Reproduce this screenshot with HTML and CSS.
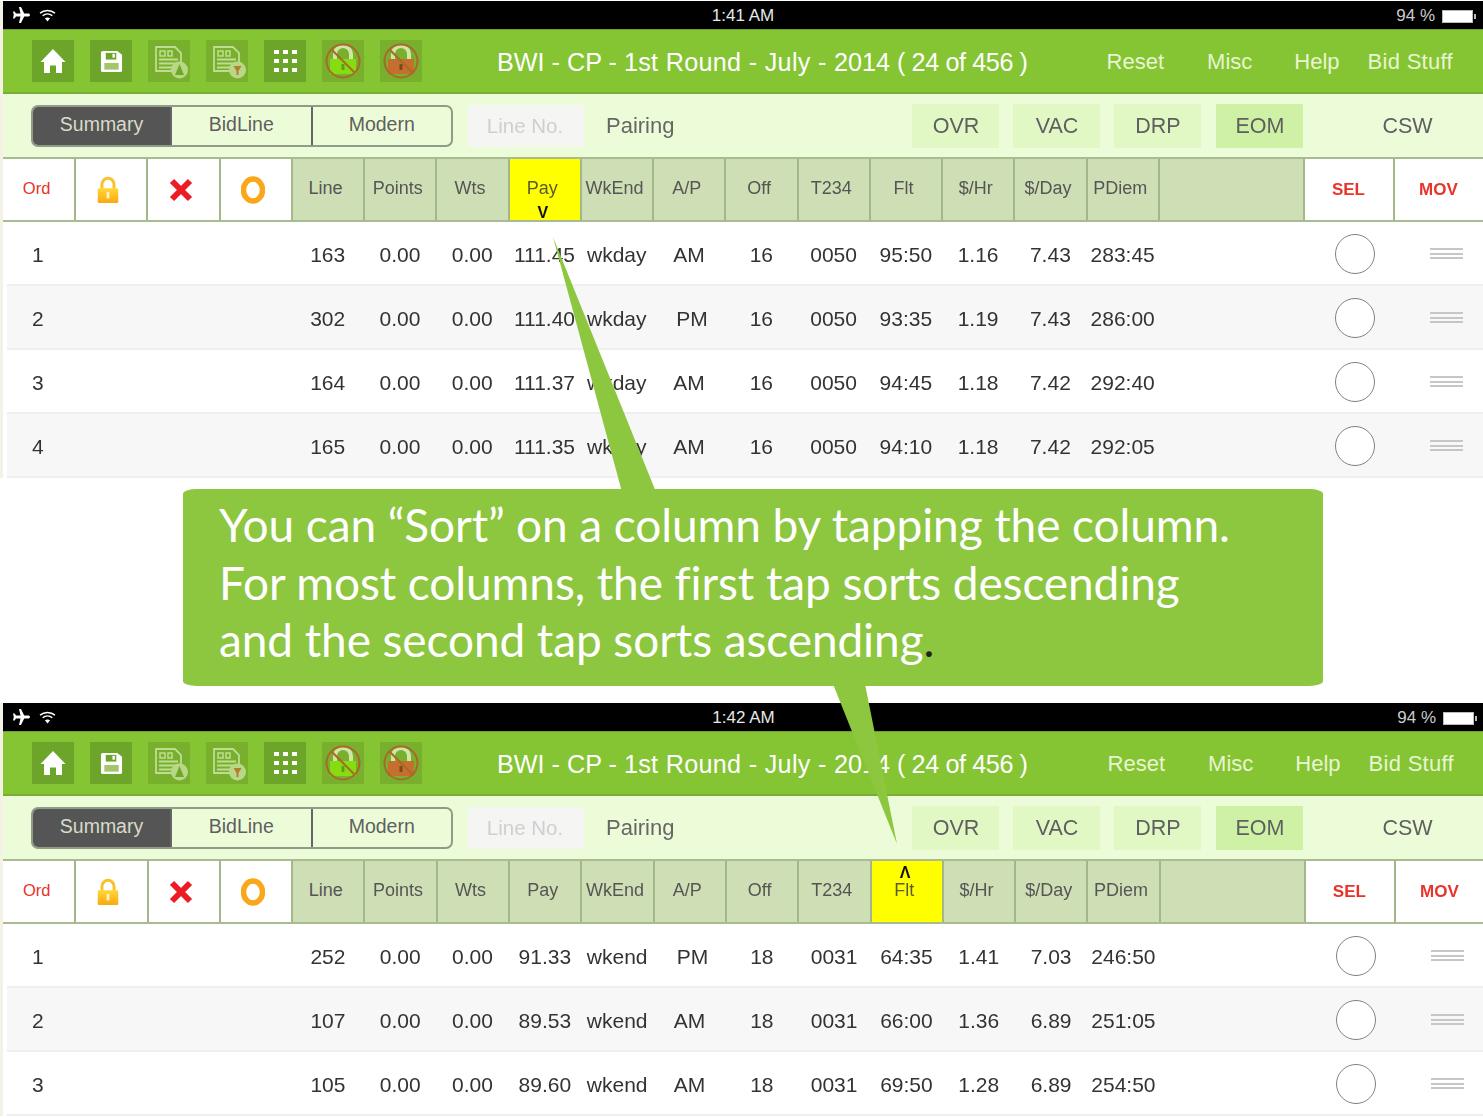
FILE: index.html
```html
<!DOCTYPE html>
<html lang="en">
<head>
<meta charset="utf-8">
<title>Sorting columns</title>
<link rel="stylesheet" href="styles.css">
</head>
<body>
<svg class="defs" width="0" height="0" aria-hidden="true">
  <defs>
    <linearGradient id="gold" x1="0" y1="0" x2="0" y2="1"><stop offset="0" stop-color="#ffd83a"/><stop offset="1" stop-color="#f9a811"/></linearGradient>
    <symbol id="plane" viewBox="0 0 18 16"><path d="M7 0h2l3.200 6.500H16c1.200 0 2 .7 2 1.500s-.8 1.500-2 1.500h-3.800L9 16H7l1.500-6.500H4L2.600 11.500H1L1.800 8 1 4.500h1.600L4 6.500h4.500z" fill="#fff"/></symbol>
    <symbol id="wifi" viewBox="0 0 18 14"><path d="M1 4.500C5.500.5 12.500.5 17 4.500" fill="none" stroke="#fff" stroke-width="1.600"/><path d="M3.800 7.300C6.800 4.800 11.200 4.800 14.200 7.300" fill="none" stroke="#fff" stroke-width="1.600"/><path d="M9 13.500 6.200 10c1.700-1.300 3.900-1.300 5.600 0z" fill="#fff"/></symbol>
    <symbol id="home" viewBox="0 0 26 26"><path d="M13 1 25.500 14H22v11h-6v-7.500h-6V25H4V14H.5z" fill="#fff"/></symbol>
    <symbol id="save" viewBox="0 0 24 24"><path d="M3 1h15l5 4v16a2 2 0 0 1-2 2H3a2 2 0 0 1-2-2V3a2 2 0 0 1 2-2z" fill="#fff"/><path d="M6 3h11v7H6z" fill="#6da52a"/><path d="M13 4h2.500v4H13z" fill="#fff"/><path d="M4.500 13.500h15v7h-15z" fill="#a3c66c"/></symbol>
    <symbol id="doc" viewBox="0 0 34 34"><path d="M2 2h19l6 6v13H19v5H2z" fill="none" stroke="#d7ebb6" stroke-width="1.800"/><path d="M6 6h5v5H6zM14 6h4v5h-4z" fill="none" stroke="#d7ebb6" stroke-width="1.500"/><path d="M5 14.500h19M5 18.500h19M5 22.500h13" stroke="#d7ebb6" stroke-width="2"/><circle cx="25.500" cy="25" r="8.500" fill="#cfe6a6"/></symbol>
    <symbol id="dots" viewBox="0 0 24 24"><path d="M1 1h5v4H1zM10 1h5v4h-5zM19 1h5v4h-5zM1 10h5v4H1zM10 10h5v4h-5zM19 10h5v4h-5zM1 19h5v4H1zM10 19h5v4h-5zM19 19h5v4h-5z" fill="#fff"/></symbol>
    <symbol id="gold-lock" viewBox="0 0 24 30"><path d="M5.500 14V9a6.500 6.500 0 0 1 13 0v5" fill="none" stroke="#fbc12c" stroke-width="3.200"/><rect x="1" y="13" width="22" height="16" rx="1.500" fill="url(#gold)"/><path d="M10.500 17h3v7h-3z" fill="#fff3c0"/></symbol>
  </defs>
</svg>

<section class="screen">
  <div class="status"><div class="status-left"><svg class="plane"><use href="#plane"/></svg><svg class="wifi"><use href="#wifi"/></svg></div><span class="clock">1:41 AM</span><div class="status-right"><span>94 %</span><span class="battery"></span></div></div>
  <div class="topbar">
    <div class="tools">
      <span class="tool"><svg class="i-home"><use href="#home"/></svg></span>
      <span class="tool"><svg class="i-save"><use href="#save"/></svg></span>
      <span class="tool faded"><svg class="i-doc" viewBox="0 0 34 34"><use href="#doc" width="34" height="34"/><path d="M25.500 19 21 30h9z" fill="#6da52a"/></svg></span>
      <span class="tool faded"><svg class="i-doc" viewBox="0 0 34 34"><use href="#doc" width="34" height="34"/><path d="M21.500 21h8l-3 5v4h-2v-4z" fill="#c56f2e"/></svg></span>
      <span class="tool"><svg class="i-dots"><use href="#dots"/></svg></span>
      <span class="tool faded"><svg class="i-lock" viewBox="0 0 36 36"><path d="M10 17v-6a8 8 0 0 1 16 0v6" fill="none" stroke="#cfe6a6" stroke-width="4"/><path d="M5 16h26v15H5z" fill="#85dd10"/><path d="M16.500 21h3v6h-3z" fill="#5f9c1c"/><circle cx="18" cy="18" r="16.500" fill="none" stroke="#a8692a" stroke-width="2"/><path d="M7 7l22 22" stroke="#a8692a" stroke-width="2"/></svg></span>
      <span class="tool faded"><svg class="i-lock" viewBox="0 0 36 36"><path d="M10 17v-6a8 8 0 0 1 16 0v6" fill="none" stroke="#cfe6a6" stroke-width="4"/><path d="M5 16h26v15H5z" fill="#c56f2e"/><path d="M16.500 21h3v6h-3z" fill="#7a4a1c"/><circle cx="18" cy="18" r="16.500" fill="none" stroke="#a8692a" stroke-width="2"/><path d="M7 7l22 22" stroke="#a8692a" stroke-width="2"/></svg></span>
    </div>
    <h1 class="title">BWI - CP - <span class="t-mid">1st Round - July - </span>2014 <span class="t-end">( 24 of 456 )</span></h1>
    <nav class="menu"><span class="m-reset">Reset</span><span class="m-misc">Misc</span><span class="m-help">Help</span><span class="m-bid">Bid Stuff</span></nav>
  </div>
  <div class="filterbar">
    <div class="seg"><span class="seg-on">Summary</span><span>BidLine</span><span>Modern</span></div>
    <span class="lineno">Line No.</span>
    <span class="pairing">Pairing</span>
    <div class="flags"><span class="flag">OVR</span><span class="flag">VAC</span><span class="flag">DRP</span><span class="flag flag-on">EOM</span></div>
    <span class="csw">CSW</span>
  </div>
  <div class="head">
    <span class="hc white red ord">Ord</span>
    <span class="hc white ic"><svg class="i-gold"><use href="#gold-lock"/></svg></span>
    <span class="hc white ic"><svg class="i-x" viewBox="0 0 24 24"><path d="M3 3l18 18M21 3 3 21" stroke="#ed1c24" stroke-width="6"/></svg></span>
    <span class="hc white ic"><svg class="i-o" viewBox="0 0 24 28"><ellipse cx="12" cy="14" rx="9.500" ry="11" fill="none" stroke="#fba71b" stroke-width="5.500"/></svg></span>
    <span class="hc">Line</span><span class="hc">Points</span><span class="hc">Wts</span>
    <span class="hc sorted">Pay<i class="arrow arrow-down">V</i></span>
    <span class="hc">WkEnd</span><span class="hc">A/P</span><span class="hc">Off</span><span class="hc">T234</span><span class="hc">Flt</span><span class="hc">$/Hr</span><span class="hc">$/Day</span><span class="hc">PDiem</span>
    <span class="hc"></span>
    <span class="hc white red strong">SEL</span><span class="hc white red strong last">MOV</span>
  </div>
  <div class="rows">
    <div class="row"><span class="num">1</span><span class="first">163</span><span>0.00</span><span>0.00</span><span>111.45</span><span>wkday</span><span>AM</span><span>16</span><span>0050</span><span>95:50</span><span>1.16</span><span>7.43</span><span>283:45</span><span class="sel"><b class="circle"></b></span><span class="mov"><b class="lines"></b></span></div>
    <div class="row"><span class="num">2</span><span class="first">302</span><span>0.00</span><span>0.00</span><span>111.40</span><span>wkday</span><span class="pm">PM</span><span>16</span><span>0050</span><span>93:35</span><span>1.19</span><span>7.43</span><span>286:00</span><span class="sel"><b class="circle"></b></span><span class="mov"><b class="lines"></b></span></div>
    <div class="row"><span class="num">3</span><span class="first">164</span><span>0.00</span><span>0.00</span><span>111.37</span><span>wkday</span><span>AM</span><span>16</span><span>0050</span><span>94:45</span><span>1.18</span><span>7.42</span><span>292:40</span><span class="sel"><b class="circle"></b></span><span class="mov"><b class="lines"></b></span></div>
    <div class="row"><span class="num">4</span><span class="first">165</span><span>0.00</span><span>0.00</span><span>111.35</span><span>wkday</span><span>AM</span><span>16</span><span>0050</span><span>94:10</span><span>1.18</span><span>7.42</span><span>292:05</span><span class="sel"><b class="circle"></b></span><span class="mov"><b class="lines"></b></span></div>
  </div>
</section>

<section class="screen lower">
  <div class="status"><div class="status-left"><svg class="plane"><use href="#plane"/></svg><svg class="wifi"><use href="#wifi"/></svg></div><span class="clock">1:42 AM</span><div class="status-right"><span>94 %</span><span class="battery"></span></div></div>
  <div class="topbar">
    <div class="tools">
      <span class="tool"><svg class="i-home"><use href="#home"/></svg></span>
      <span class="tool"><svg class="i-save"><use href="#save"/></svg></span>
      <span class="tool faded"><svg class="i-doc" viewBox="0 0 34 34"><use href="#doc" width="34" height="34"/><path d="M25.500 19 21 30h9z" fill="#6da52a"/></svg></span>
      <span class="tool faded"><svg class="i-doc" viewBox="0 0 34 34"><use href="#doc" width="34" height="34"/><path d="M21.500 21h8l-3 5v4h-2v-4z" fill="#c56f2e"/></svg></span>
      <span class="tool"><svg class="i-dots"><use href="#dots"/></svg></span>
      <span class="tool faded"><svg class="i-lock" viewBox="0 0 36 36"><path d="M10 17v-6a8 8 0 0 1 16 0v6" fill="none" stroke="#cfe6a6" stroke-width="4"/><path d="M5 16h26v15H5z" fill="#85dd10"/><path d="M16.500 21h3v6h-3z" fill="#5f9c1c"/><circle cx="18" cy="18" r="16.500" fill="none" stroke="#a8692a" stroke-width="2"/><path d="M7 7l22 22" stroke="#a8692a" stroke-width="2"/></svg></span>
      <span class="tool faded"><svg class="i-lock" viewBox="0 0 36 36"><path d="M10 17v-6a8 8 0 0 1 16 0v6" fill="none" stroke="#cfe6a6" stroke-width="4"/><path d="M5 16h26v15H5z" fill="#c56f2e"/><path d="M16.500 21h3v6h-3z" fill="#7a4a1c"/><circle cx="18" cy="18" r="16.500" fill="none" stroke="#a8692a" stroke-width="2"/><path d="M7 7l22 22" stroke="#a8692a" stroke-width="2"/></svg></span>
    </div>
    <h1 class="title">BWI - CP - <span class="t-mid">1st Round - July - </span>2014 <span class="t-end">( 24 of 456 )</span></h1>
    <nav class="menu"><span class="m-reset">Reset</span><span class="m-misc">Misc</span><span class="m-help">Help</span><span class="m-bid">Bid Stuff</span></nav>
  </div>
  <div class="filterbar">
    <div class="seg"><span class="seg-on">Summary</span><span>BidLine</span><span>Modern</span></div>
    <span class="lineno">Line No.</span>
    <span class="pairing">Pairing</span>
    <div class="flags"><span class="flag">OVR</span><span class="flag">VAC</span><span class="flag">DRP</span><span class="flag flag-on">EOM</span></div>
    <span class="csw">CSW</span>
  </div>
  <div class="head">
    <span class="hc white red ord">Ord</span>
    <span class="hc white ic"><svg class="i-gold"><use href="#gold-lock"/></svg></span>
    <span class="hc white ic"><svg class="i-x" viewBox="0 0 24 24"><path d="M3 3l18 18M21 3 3 21" stroke="#ed1c24" stroke-width="6"/></svg></span>
    <span class="hc white ic"><svg class="i-o" viewBox="0 0 24 28"><ellipse cx="12" cy="14" rx="9.500" ry="11" fill="none" stroke="#fba71b" stroke-width="5.500"/></svg></span>
    <span class="hc">Line</span><span class="hc">Points</span><span class="hc">Wts</span><span class="hc">Pay</span><span class="hc">WkEnd</span><span class="hc">A/P</span><span class="hc">Off</span><span class="hc">T234</span>
    <span class="hc sorted">Flt<i class="arrow arrow-up">Λ</i></span>
    <span class="hc">$/Hr</span><span class="hc">$/Day</span><span class="hc">PDiem</span>
    <span class="hc"></span>
    <span class="hc white red strong">SEL</span><span class="hc white red strong last">MOV</span>
  </div>
  <div class="rows">
    <div class="row"><span class="num">1</span><span class="first">252</span><span>0.00</span><span>0.00</span><span>91.33</span><span>wkend</span><span class="pm2">PM</span><span>18</span><span>0031</span><span>64:35</span><span>1.41</span><span>7.03</span><span>246:50</span><span class="sel"><b class="circle"></b></span><span class="mov"><b class="lines"></b></span></div>
    <div class="row"><span class="num">2</span><span class="first">107</span><span>0.00</span><span>0.00</span><span>89.53</span><span>wkend</span><span>AM</span><span>18</span><span>0031</span><span>66:00</span><span>1.36</span><span>6.89</span><span>251:05</span><span class="sel"><b class="circle"></b></span><span class="mov"><b class="lines"></b></span></div>
    <div class="row"><span class="num">3</span><span class="first">105</span><span>0.00</span><span>0.00</span><span>89.60</span><span>wkend</span><span>AM</span><span>18</span><span>0031</span><span>69:50</span><span>1.28</span><span>6.89</span><span>254:50</span><span class="sel"><b class="circle"></b></span><span class="mov"><b class="lines"></b></span></div>
  </div>
</section>

<svg class="tails" viewBox="0 0 1483 1117" aria-hidden="true">
  <polygon points="553,237 622,492 656,492"/>
  <polygon points="833,684 865,684 897,844"/>
</svg>
<aside class="callout">
  <span class="c1">You can “Sort” on a column by tapping the column.</span>
  <span class="c2">For most columns, the first tap sorts descending</span>
  <span class="c3">and the second tap sorts ascending<em>.</em></span>
</aside>
</body>
</html>
```
FILE: styles.css
```css
* { box-sizing: border-box; }
html, body { margin: 0; padding: 0; }
body {
  position: relative;
  height: 1117px;
  padding-top: 1px;
  overflow: hidden;
  background: #fff;
  font-family: "Liberation Sans", Arial, sans-serif;
  color: #333;
}
.defs { position: absolute; }

.screen {
  width: 1483px;
  border-left: 3px solid #f4f2e4;
  filter: blur(.45px);
}
.lower { width: 1484px; margin-top: 225px; }

.status {
  display: grid;
  grid-template-columns: 1fr auto 1fr;
  align-items: center;
  height: 28px;
  padding-top: 2px;
  background: #000;
  color: #ddd;
  font-size: 17px;
}
.status-left { display: flex; align-items: center; gap: 9px; padding: 0 0 2px 9px; }
.plane { width: 18px; height: 16px; }
.wifi { width: 17px; height: 13px; }
.clock { color: #e8e8e8; }
.status-right { display: flex; align-items: center; justify-content: flex-end; gap: 7px; padding-right: 10px; color: #ccc; }
.battery {
  position: relative;
  width: 31px;
  height: 13px;
  background: #fff;
  border: 1px solid #bbb;
}
.battery::after {
  content: "";
  position: absolute;
  right: -4px;
  top: 3px;
  width: 2px;
  height: 5px;
  background: #bbb;
}

.topbar {
  display: flex;
  align-items: center;
  height: 65px;
  padding: 0 30px 0 29px;
  background: #85c433;
  border-top: 1px solid #6e9f30;
  border-bottom: 2px solid #78ae33;
}
.tools { display: flex; gap: 16px; }
.tool {
  display: flex;
  align-items: center;
  justify-content: center;
  width: 42px;
  height: 42px;
  background: #6da52a;
}
.faded { background: #78b02d; }
.i-home { width: 26px; height: 26px; }
.i-save { width: 23px; height: 23px; }
.i-doc { width: 34px; height: 34px; margin: 2px 0 0 4px; opacity: .75; }
.i-dots { width: 24px; height: 24px; }
.i-lock { width: 36px; height: 36px; }
.title {
  margin: 2px 0 0 75px;
  color: #fff;
  font-size: 25.200px;
  font-weight: 400;
  white-space: nowrap;
}
.t-mid { letter-spacing: .3px; }
.t-end { letter-spacing: -.4px; }
.menu {
  display: flex;
  margin: 2px 0 0 auto;
  color: #e8f5d2;
  font-size: 22px;
  white-space: nowrap;
}
.m-reset { margin-right: 43px; }
.m-misc { margin-right: 42px; }
.m-help { margin-right: 28px; }
.m-bid { letter-spacing: .3px; }

.filterbar {
  display: flex;
  align-items: center;
  height: 63px;
  padding-left: 28px;
  background: #edfcd8;
  color: #5f5f5f;
}
.seg {
  display: flex;
  width: 422px;
  height: 42px;
  border: 2px solid #8f9c87;
  border-radius: 7px;
  overflow: hidden;
  font-size: 19.500px;
}
.seg span {
  display: flex;
  flex: 1;
  align-items: center;
  justify-content: center;
  border-left: 2px solid #666;
  padding-bottom: 2px;
}
.seg .seg-on { flex: none; width: 137px; border-left: 0; background: #555; color: #d7dcc9; }
.lineno {
  display: flex;
  align-items: center;
  justify-content: center;
  width: 116px;
  height: 42px;
  margin-left: 15px;
  padding-right: 2px;
  background: #f5f6f3;
  color: #cfcfd2;
  font-size: 20.500px;
}
.pairing { margin-left: 22px; font-size: 22px; color: #666; }
.flags { display: flex; gap: 14px; margin-left: 238px; }
.flag {
  display: flex;
  align-items: center;
  justify-content: center;
  width: 87px;
  height: 44px;
  padding-top: 2px;
  background: #e1f8c4;
  font-size: 21.500px;
}
.flag:nth-child(4) { margin-left: 1px; }
.flag-on { background: #cff1a5; }
.csw { margin: 2px 0 0 79px; font-size: 21.500px; }

.head, .row {
  display: grid;
}
.head {
  grid-template-columns: 73.22fr repeat(15, 72.22fr) 145fr 90fr 88fr;
  height: 65px;
  border-top: 2px solid #a9bb90;
  border-bottom: 2px solid #a9bb90;
  background: #a3b78a;
}
.hc {
  position: relative;
  display: flex;
  align-items: center;
  justify-content: center;
  margin-right: 2px;
  padding: 0 5px 2px 0;
  background: #cfdfb5;
  color: #555;
  font-size: 18px;
  white-space: nowrap;
}
.white { background: #fff; }
.red { color: #e8332a; }
.ord { font-size: 16.500px; padding: 0 4px 3px 0; }
.ic { padding: 0 6px 0 0; }
.strong { font-size: 17px; font-weight: 700; padding: 1px 1px 0 0; }
.last { margin-right: 0; }
.sorted { background: #ff0; color: #5a5a30; }
.arrow {
  position: absolute;
  left: 0;
  right: 0;
  color: #111;
  font-size: 16px;
  font-weight: 700;
  font-style: normal;
  text-align: center;
}
.arrow-down { bottom: -2px; right: 4px; }
.arrow-up { top: 3px; right: 3px; }
.i-gold { width: 24px; height: 28px; }
.i-x { width: 24px; height: 24px; margin-top: 1px; }
.i-o { width: 24px; height: 28px; margin-top: 1px; }

.rows { margin-left: 4px; }
.row {
  grid-template-columns: 67.72fr repeat(15, 72.22fr) 145fr 90fr 89fr;
  align-items: center;
  height: 64px;
  padding-top: 3px;
  border-bottom: 2px solid #efefef;
  font-size: 21px;
  text-align: center;
  white-space: nowrap;
}
.row:nth-child(even) { background: #f7f7f7; }
.num { padding-right: 6px; }
.first { grid-column: 5; }
.pm { padding-left: 6px; }
.pm2 { padding-left: 6px; }
.sel { grid-column: 18; display: flex; justify-content: center; padding: 0 0 2px 12px; }
.mov { display: flex; justify-content: center; padding: 0 0 2px 16px; }
.circle {
  width: 40px;
  height: 40px;
  border: 1.500px solid #808080;
  border-radius: 50%;
  background: #fff;
}
.lines {
  width: 33px;
  height: 11px;
  border-top: 2px solid #c6c6c6;
  border-bottom: 2px solid #c6c6c6;
  background: linear-gradient(#c6c6c6, #c6c6c6) center / 100% 2px no-repeat;
}

.tails {
  position: absolute;
  left: 0;
  top: 0;
  z-index: 2;
  width: 1483px;
  height: 1117px;
  fill: #8dc63f;
}
.callout {
  position: absolute;
  left: 183px;
  top: 489px;
  z-index: 3;
  width: 1140px;
  height: 197px;
  padding: 7px 0 0 36px;
  border-radius: 14px / 5px;
  background: #8dc63f;
  color: #fff;
  font-family: Lato, "Open Sans", sans-serif;
  font-size: 46px;
  line-height: 57.500px;
  letter-spacing: -.1px;
  white-space: nowrap;
}
.callout span { display: block; }
.callout em { color: #222; font-style: normal; }
```
